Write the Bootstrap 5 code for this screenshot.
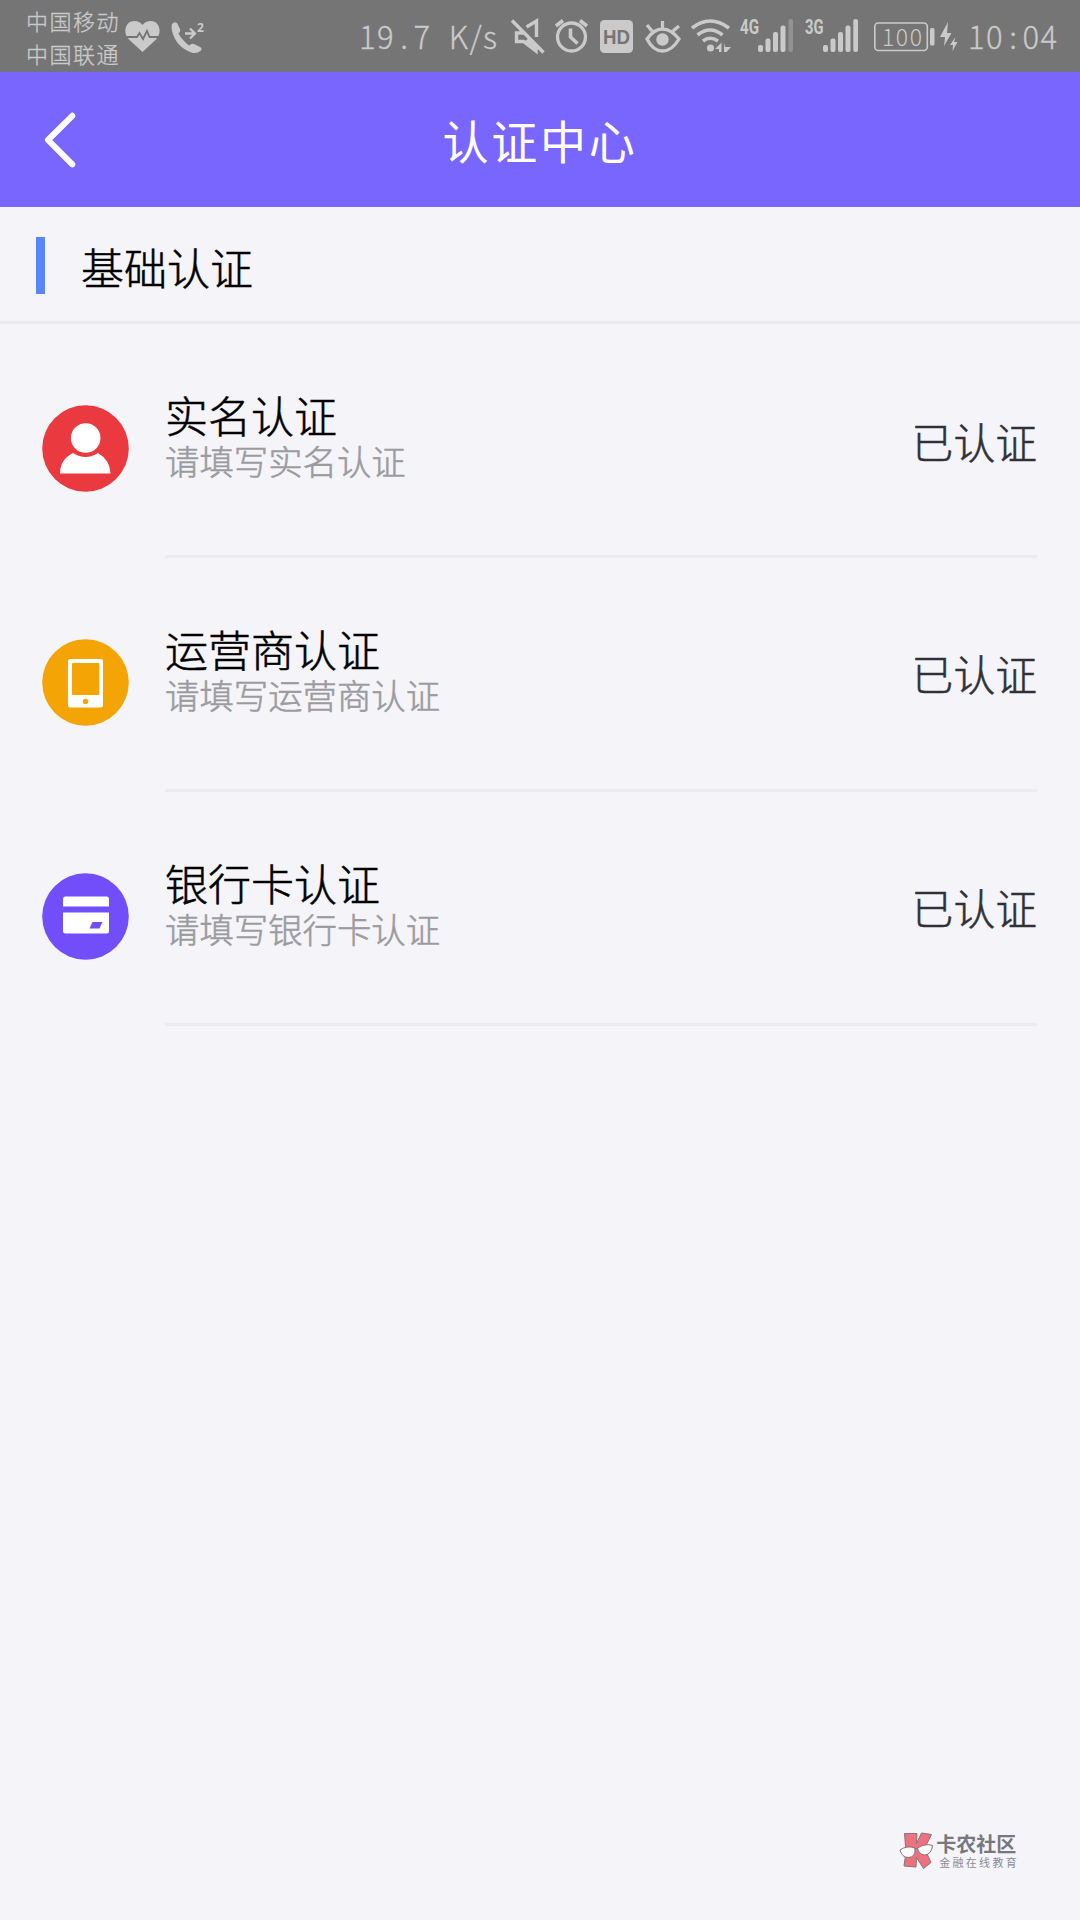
<!DOCTYPE html>
<html lang="zh-CN">
<head>
<meta charset="utf-8">
<meta name="viewport" content="width=device-width, initial-scale=1">
<title>认证中心</title>
<link href="https://cdn.jsdelivr.net/npm/bootstrap@5.3.0/dist/css/bootstrap.min.css" rel="stylesheet">
<style>
body{background:#f4f4f9;color:#000;font-family:"Noto Sans CJK SC",sans-serif;font-weight:300;-webkit-text-stroke:.55px currentColor}
.screen{width:1080px;height:1920px;overflow:hidden}
svg{display:block;flex:none;-webkit-text-stroke:0}
.statusbar{height:72px;background:#757575;color:#cacaca;-webkit-text-stroke:.3px currentColor}
.carriers{width:120px;padding:4px 0 0 26px;font-size:22px;line-height:33px;letter-spacing:1.5px;white-space:nowrap}
.speed,.clock{font-size:31px;line-height:72px;letter-spacing:1.4px;white-space:pre;height:72px}
.speed{width:151px;word-spacing:9px}
.clock{width:112px}
.pt{display:inline-block;width:18.5px;text-align:center;letter-spacing:0}
.titlebar{height:135px;background:#7966ff;color:#fff}
.backbtn{width:120px}
.heading-txt{font-size:46px;letter-spacing:2.7px;line-height:135px;font-weight:400;-webkit-text-stroke:0}
.sect{height:117px;padding-left:36px;border-bottom:3px solid #e9e9ee}
.sect-bar{width:9px;height:57px;background:#5b86f7;margin-top:30px}
.sect-name{font-size:43px;line-height:60px;margin:29px 0 0 36px}
.entry{height:234px;margin:0 43px 0 42px}
.entry-icon{margin-top:81px}
.entry-main{margin-left:36px;border-bottom:3px solid #ebebf0}
.entry-title{font-size:43px;line-height:52px;margin-top:64px}
.entry-sub{font-size:34.4px;line-height:40px;color:#9b9b9f}
.entry-state{font-size:41.8px;line-height:60px;color:#303036;margin-top:85px}
.entry.first .entry-state{margin-top:87px}
.brandmark{padding:0 61px 50px 0;color:#777780;-webkit-text-stroke:0}
.brand-a{font-size:20px;line-height:22px;font-weight:700;padding-top:1px}
.brand-b{font-size:11px;line-height:14px;letter-spacing:2.3px;padding-left:3px;color:#8c8c94;font-weight:400}
</style>
<script src="https://cdn.jsdelivr.net/npm/bootstrap@5.3.0/dist/js/bootstrap.bundle.min.js"></script>
</head>
<body>
<div class="screen d-flex flex-column">
  <header>
    <div class="statusbar d-flex">
      <div class="carriers">中国移动<br>中国联通</div>
      <svg width="90" height="72" viewBox="120 0 90 72" fill="#cacaca">
        <path d="M142.500 52L129 39.500C122 32 126 21 134 21c4 0 6.500 1.500 8.500 4 2-2.500 4.500-4 8.500-4 8 0 12 11 5 18.500z"/>
        <path d="M126 37h11l2.500-4 3.500 6 4-8 2.500 6H159" fill="none" stroke="#757575" stroke-width="1.800"/>
        <path d="M172 24q3-3 5-1l3 6q1 2-1.500 4.500Q182 40 189 45.500q2.500-2.500 5-1.500l6 3q3 1.500.5 4-4 3-9 1.500Q176 47 172 31q-1-4 0-7z"/>
        <path d="M185 33.500h10M190 28.500l5 5-5 5" fill="none" stroke="#cacaca" stroke-width="2.300"/>
        <text x="197" y="31.500" font-size="12" font-weight="700" font-family="Open Sans,sans-serif">2</text>
      </svg>
      <div class="speed ms-auto">19<span class="pt">.</span>7 K/s</div>
      <svg width="87" height="72" viewBox="510 0 87 72" fill="none" stroke="#cacaca" stroke-width="3.400">
        <path d="M512 20.500l31.500 32M525 33h-8.500v8.500h7L536 51V44M526.500 27l10-6V37"/>
        <path d="M525 41l12 9V46l-8-8z" fill="#cacaca" stroke="none"/>
        <circle cx="571.500" cy="37" r="14" stroke-width="3.300"/><path d="M570.500 28.500V37l7 6.500M556 26l7-5.500M587 26l-7-5.500" stroke-width="3.600"/>
      </svg>
      <svg width="90" height="72" viewBox="597 0 90 72">
        <rect x="600" y="20" width="33" height="33" rx="4.500" fill="#cacaca"/>
        <text x="616.500" y="44" text-anchor="middle" textLength="27" lengthAdjust="spacingAndGlyphs" font-size="21" font-weight="700" font-family="Liberation Sans,sans-serif" fill="#757575">HD</text>
        <path d="M647 39q7-10 15.500-10T679 39q-7 12-16.500 12T647 39zM662.500 29v-8M652 31l-5-6M673 31l6-5" fill="none" stroke="#cacaca" stroke-width="3.300"/>
        <circle cx="662.500" cy="39.500" r="6.200" fill="#cacaca"/>
      </svg>
      <svg width="50" height="72" viewBox="687 0 50 72">
        <g fill="none" stroke="#cacaca" stroke-width="3.600"><path d="M692 28q18-14 37 0M697.500 35q12.500-10 25 0M703 41q7-5.500 15 0"/></g>
        <circle cx="710.500" cy="48" r="3.600" fill="#cacaca"/>
        <path d="M721.500 42.500v9.500h-2.500v-3h-4zM724 42.500l1 4.500h6l-4.500 5H724z" fill="#cacaca"/>
      </svg>
      <svg width="65" height="72" viewBox="737 0 65 72" fill="#cacaca">
        <text x="740" y="33.500" textLength="19" lengthAdjust="spacingAndGlyphs" font-size="19.500" font-weight="700" font-family="Roboto,sans-serif">4G</text>
        <rect x="758" y="45" width="5" height="7" rx="2"/><rect x="765.500" y="38.500" width="5" height="13.500" rx="2"/><rect x="773" y="32" width="5" height="20" rx="2"/><rect x="780.500" y="25.500" width="5" height="26.500" rx="2"/><rect x="788.500" y="19" width="4.500" height="33" rx="2" fill="#929292"/>
      </svg>
      <svg width="68" height="72" viewBox="802 0 68 72" fill="#cacaca">
        <text x="805" y="33.500" textLength="18.500" lengthAdjust="spacingAndGlyphs" font-size="19.500" font-weight="700" font-family="Roboto,sans-serif">3G</text>
        <rect x="823" y="45" width="5" height="7" rx="2"/><rect x="830.500" y="38.500" width="5" height="13.500" rx="2"/><rect x="838" y="32" width="5" height="20" rx="2"/><rect x="845.500" y="25.500" width="5" height="26.500" rx="2"/><rect x="853.300" y="19" width="4.700" height="33" rx="2"/>
      </svg>
      <svg width="98" height="72" viewBox="870 0 98 72" fill="#cacaca">
        <rect x="874.800" y="23" width="52.500" height="27.500" rx="3.500" fill="none" stroke="#cacaca" stroke-width="1.600"/>
        <text x="882" y="45.500" textLength="40" font-size="23" font-weight="300" font-family="Noto Sans CJK SC,sans-serif">100</text>
        <rect x="930" y="28" width="4.500" height="17.500" rx="1.500"/>
        <path d="M948 22l-8 15h5l-1 9 7.500-13h-4.500zM955.500 37l-5.500 8h3l-.5 6 5-9h-3.500z"/>
      </svg>
      <div class="clock">10<span class="pt">:</span>04</div>
    </div>
    <nav class="titlebar d-flex">
      <a class="backbtn" href="#" aria-label="返回"><svg width="120" height="135" viewBox="0 72 120 135" fill="none" stroke="#fff" stroke-width="6" stroke-linecap="round" stroke-linejoin="round"><path d="M72.300 115.800L48 140l24.300 24.300"/></svg></a>
      <h1 class="heading-txt flex-grow-1 text-center m-0">认证中心</h1>
      <div class="backbtn"></div>
    </nav>
  </header>
  <section class="sect d-flex"><div class="sect-bar"></div><div class="sect-name">基础认证</div></section>
  <main>
    <div class="entry first d-flex">
      <svg class="entry-icon" width="87" height="87" viewBox="0 0 87 87"><circle cx="43.500" cy="43.500" r="43.300" fill="#eb3940"/><circle cx="43.700" cy="33" r="14.800" fill="#fff"/><path d="M18 68.500q0-14 13-20.500 12.500 8 25 0 12 7 12.500 20.500z" fill="#fff"/></svg>
      <div class="entry-main d-flex flex-grow-1 justify-content-between">
        <div><div class="entry-title">实名认证</div><div class="entry-sub">请填写实名认证</div></div><div class="entry-state">已认证</div>
      </div>
    </div>
    <div class="entry d-flex">
      <svg class="entry-icon" width="87" height="87" viewBox="0 0 87 87"><circle cx="43.500" cy="43.500" r="43.300" fill="#f4a404"/><rect x="26" y="20" width="35" height="48.500" rx="2.500" fill="#fff"/><rect x="30" y="24" width="27.300" height="32" rx="1" fill="#f4a404"/><circle cx="43.500" cy="62.500" r="2.700" fill="#f4a404"/></svg>
      <div class="entry-main d-flex flex-grow-1 justify-content-between">
        <div><div class="entry-title">运营商认证</div><div class="entry-sub">请填写运营商认证</div></div><div class="entry-state">已认证</div>
      </div>
    </div>
    <div class="entry d-flex">
      <svg class="entry-icon" width="87" height="87" viewBox="0 0 87 87"><circle cx="43.500" cy="43.500" r="43.300" fill="#724dfa"/><path d="M21 33.500V26q0-2.500 2.500-2.500h41Q67 23.500 67 26v7.500zM21 39.500h46V58q0 2.500-2.500 2.500h-41Q21 60.500 21 58z" fill="#fff"/><path d="M50.500 49H60.500L57.500 55.500H47.500z" fill="#724dfa"/></svg>
      <div class="entry-main d-flex flex-grow-1 justify-content-between">
        <div><div class="entry-title">银行卡认证</div><div class="entry-sub">请填写银行卡认证</div></div><div class="entry-state">已认证</div>
      </div>
    </div>
  </main>
  <footer class="brandmark mt-auto d-flex justify-content-end">
    <svg width="37" height="38" viewBox="900 1832 37 38" stroke="#85757d" stroke-width="1"><path d="M905.500 1833.500h12.500l-.5 10 5-10.500 10 1.500-7 14 6.500 14-7.500 6-7-11-.5 9.500-12-1 2-14z" fill="#f0717e"/><path d="M901 1850q7-5 15-2 1 9-6.500 9.500-6.500 0-8.500-7.500zM918.500 1848q8-5 15-2.500-1 9-8 9.500-6-1-7-7z" fill="#fbfbff"/><path d="M915.500 1849q1.500-1.500 3 0" fill="none"/></svg>
    <div><div class="brand-a">卡农社区</div><div class="brand-b">金融在线教育</div></div>
  </footer>
</div>
</body>
</html>
